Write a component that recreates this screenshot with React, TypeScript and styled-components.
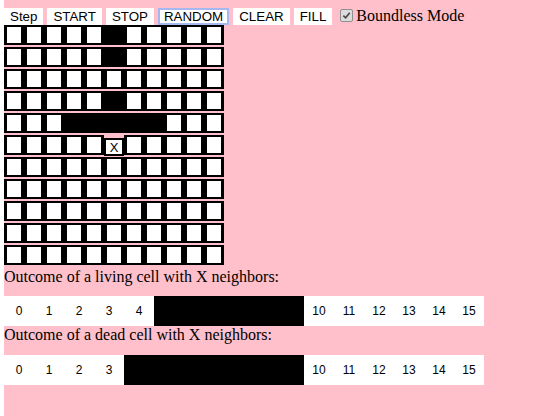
import React from 'react';
import styled, { createGlobalStyle } from 'styled-components';

const GlobalStyle = createGlobalStyle`
  html {
    background: #fff;
  }
  body {
    margin: 0 0 0 4px;
    font-family: 'Liberation Serif', 'Times New Roman', serif;
    font-size: 16px;
  }
`;

const Page = styled.div`
  background: #ffc0cb;
  min-height: 100vh;
`;

const Toolbar = styled.div`
  display: flex;
  align-items: baseline;
  gap: 4px;
  height: 25px;
  padding-top: 7px;
  box-sizing: border-box;
`;

const ToolButton = styled.button<{ $focused?: boolean }>`
  font-family: 'Liberation Sans', Arial, sans-serif;
  font-size: 13.33px;
  line-height: 15px;
  padding: 1px 6px;
  border: none;
  background: #fff;
  color: #000;
  box-shadow: ${(p) => (p.$focused ? 'inset 0 0 0 2px #a6b9ef' : 'none')};
  cursor: pointer;
`;

const CheckLabel = styled.label`
  display: flex;
  align-items: baseline;
  margin-left: 4px;
  line-height: 18px;
  color: #000;
`;

const CheckBox = styled.span`
  display: inline-flex;
  align-items: center;
  justify-content: center;
  width: 11px;
  height: 11px;
  border: 1px solid #8f8f8f;
  border-radius: 2px;
  background: #dcdcdc;
  margin-right: 3px;
  align-self: center;
  transform: translateY(-1px);
`;

const Grid = styled.div`
  display: flex;
  flex-direction: column;
  gap: 2px;
  padding-bottom: 3px;
`;

const Row = styled.div`
  display: flex;
  align-items: flex-start;
  height: 20px;
`;

const Cell = styled.div<{ $alive?: boolean; $marked?: boolean }>`
  box-sizing: border-box;
  width: 20px;
  height: ${(p) => (p.$marked ? '18px' : '20px')};
  margin-top: ${(p) => (p.$marked ? '3px' : '0')};
  border-style: solid;
  border-color: #000;
  border-width: ${(p) => (p.$marked ? '2px' : '2px 3px')};
  background: ${(p) => (p.$alive ? '#000' : '#fff')};
  display: flex;
  align-items: center;
  justify-content: center;
  font-family: 'Liberation Sans', Arial, sans-serif;
  font-size: 13px;
  color: #000;
`;

const Caption = styled.div`
  line-height: 18.4px;
  color: #000;
`;

const RuleBar = styled.div`
  display: flex;
  width: 480px;
  margin-top: 10px;
  background: #fff;
`;

const RuleCell = styled.div<{ $on?: boolean }>`
  width: 30px;
  height: 30px;
  display: flex;
  align-items: center;
  justify-content: center;
  background: ${(p) => (p.$on ? '#000' : '#fff')};
  color: #000;
  font-family: 'Liberation Sans', Arial, sans-serif;
  font-size: 12px;
`;

const SIZE = 11;
const alive = new Set(['0,5', '1,5', '3,5', '4,3', '4,4', '4,5', '4,6', '4,7']);
const marked = '5,5';

const liveRule = [5, 6, 7, 8, 9];
const deadRule = [4, 5, 6, 7, 8, 9];

const Rules = ({ on }: { on: number[] }) => (
  <RuleBar>
    {Array.from({ length: 16 }, (_, n) => (
      <RuleCell key={n} $on={on.includes(n)}>
        {n}
      </RuleCell>
    ))}
  </RuleBar>
);

const App = () => {
  return (
    <Page>
      <GlobalStyle />
      <Toolbar>
        <ToolButton>Step</ToolButton>
        <ToolButton>START</ToolButton>
        <ToolButton>STOP</ToolButton>
        <ToolButton $focused>RANDOM</ToolButton>
        <ToolButton>CLEAR</ToolButton>
        <ToolButton>FILL</ToolButton>
        <CheckLabel>
          <CheckBox>
            <svg width="9" height="9" viewBox="0 0 10 10">
              <path d="M1.5 5.2 L4 7.6 L8.6 2" fill="none" stroke="#4a4a4a" strokeWidth="1.9" />
            </svg>
          </CheckBox>
          Boundless Mode
        </CheckLabel>
      </Toolbar>
      <Grid>
        {Array.from({ length: SIZE }, (_, r) => (
          <Row key={r}>
            {Array.from({ length: SIZE }, (_, c) => {
              const key = `${r},${c}`;
              const isMarked = key === marked;
              return (
                <Cell key={c} $alive={alive.has(key)} $marked={isMarked}>
                  {isMarked ? 'X' : null}
                </Cell>
              );
            })}
          </Row>
        ))}
      </Grid>
      <Caption>Outcome of a living cell with X neighbors:</Caption>
      <Rules on={liveRule} />
      <Caption>Outcome of a dead cell with X neighbors:</Caption>
      <Rules on={deadRule} />
    </Page>
  );
};

export default App;
